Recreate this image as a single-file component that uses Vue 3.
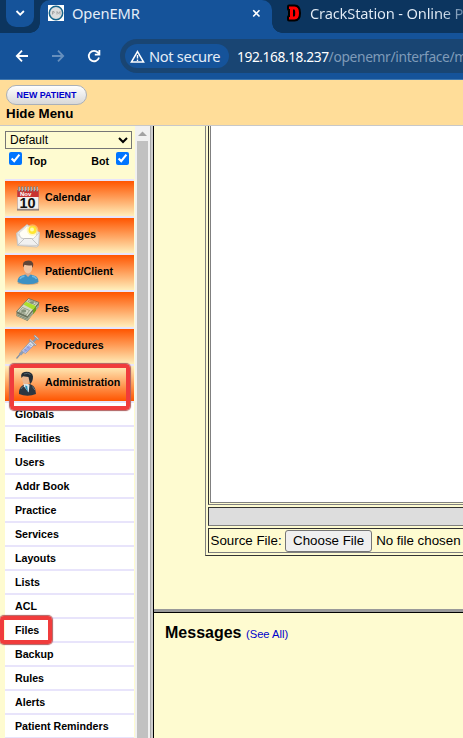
<script setup>
import { ref } from 'vue'

const menu = [
  { label: 'Calendar', icon: 'calendar' },
  { label: 'Messages', icon: 'mail' },
  { label: 'Patient/Client', icon: 'patient' },
  { label: 'Fees', icon: 'money' },
  { label: 'Procedures', icon: 'syringe' },
  { label: 'Administration', icon: 'admin', open: true },
]
const items = ['Globals', 'Facilities', 'Users', 'Addr Book', 'Practice', 'Services', 'Layouts', 'Lists', 'ACL', 'Files', 'Backup', 'Rules', 'Alerts', 'Patient Reminders']
const top = ref(true)
const bottom = ref(true)
</script>

<template>
  <div class="window">
    <div class="tabs">
      <div class="tab-search">
        <svg width="28" height="27" viewBox="0 0 28 27"><path d="M10.500 11l3.700 3.700 3.700-3.700" fill="none" stroke="#fff" stroke-width="1.800" /></svg>
      </div>
      <div class="tab active">
        <svg class="fav" width="16" height="16" viewBox="0 0 16 16">
          <rect width="16" height="16" fill="#fff" />
          <circle cx="8" cy="8" r="6.700" fill="#dedede" stroke="#17658b" stroke-width="1.500" />
          <path d="M4.500 9.500V6.500h1.500q1.500 1-1.500 2M9 9.500v-3l1.500 2 1.500-2v3" fill="none" stroke="#999" stroke-width=".8" />
        </svg>
        <span class="tab-title first">OpenEMR</span>
        <svg class="close" width="9" height="9" viewBox="0 0 9 9"><path d="M1.200 1.200l6.300 6.300M7.500 1.200L1.200 7.500" stroke="#fff" stroke-width="1.600" /></svg>
      </div>
      <div class="tab idle">
        <svg class="fav" width="16" height="18" viewBox="0 0 16 18">
          <path d="M3 2.500h5.500q4.500 0 4.500 6.500t-4.500 6.500H3V13h1V5H3z" fill="#000" stroke="#000" stroke-width="4" stroke-linejoin="round" />
          <path d="M3 2.500h5.500q4.500 0 4.500 6.500t-4.500 6.500H3V13h1V5H3z" fill="#f00" />
          <path d="M7 5.500h1.200q1 0 1 3.500t-1 3.500H7z" fill="#000" />
        </svg>
        <span class="tab-title second">CrackStation - Online P</span>
      </div>
    </div>

    <div class="toolbar">
      <svg class="nav" width="14" height="14" viewBox="0 0 14 14"><path d="M13 7H2M7 1.700L1.800 7 7 12.300" fill="none" stroke="#fff" stroke-width="1.800" /></svg>
      <svg class="nav" width="14" height="14" viewBox="0 0 14 14"><path d="M1 7h11M7 1.700L12.200 7 7 12.300" fill="none" stroke="#668fbd" stroke-width="1.800" /></svg>
      <svg class="nav" width="14" height="14" viewBox="0 0 14 14"><path d="M12 8.500A5.200 5.200 0 1 1 11 3.700L12 5M12.400 1v4.700H7.800" fill="none" stroke="#fff" stroke-width="1.800" /></svg>
      <div class="address">
        <div class="chip">
          <svg width="15" height="13" viewBox="0 0 15 13"><path d="M7.500 1.600L13.600 12H1.400z" fill="none" stroke="#fff" stroke-width="1.500" /><path d="M7.500 5v3.500M7.500 9.500V11" stroke="#fff" stroke-width="1.400" /></svg>
          <span class="chip-text">Not secure</span>
        </div>
        <span class="url"><b>192.168.18.237</b><span class="path">/openemr/interface/m</span></span>
      </div>
    </div>

    <header class="header">
      <a class="new-patient">NEW PATIENT</a>
      <div class="hide-menu">Hide Menu</div>
    </header>

    <div class="body">
      <aside class="sidebar">
        <select class="select"><option>Default</option></select>
        <div class="checks">
          <input v-model="top" type="checkbox"><span class="top-label">Top</span>
          <span class="bot-label">Bot</span><input v-model="bottom" type="checkbox">
        </div>
        <nav class="menu">
          <div v-for="m in menu" :key="m.label" class="group" :class="{ open: m.open }">
            <svg class="icon" width="24" height="25" viewBox="0 0 24 25">
              <g v-if="m.icon === 'calendar'">
                <path d="M1 22h22v2.500H1z" fill="#80706e" />
                <rect x="1.500" y="4" width="21" height="19" fill="#f2f0ef" stroke="#b9a9a5" stroke-width=".7" />
                <rect x="1.200" y="4" width="21.600" height="7" fill="#c83332" />
                <path d="M3 .5v5M6 .5v5M9 .5v5M12 .5v5M15 .5v5M18 .5v5M21 .5v5" stroke="#777" stroke-width="1.800" />
                <path d="M3.300 1v4M6.300 1v4M9.300 1v4M12.300 1v4M15.300 1v4M18.300 1v4M21.300 1v4" stroke="#d8d0d0" stroke-width=".8" />
                <text x="4" y="10.300" class="cal-month">Nov</text>
                <text x="11.500" y="21.500" text-anchor="middle" class="cal-day">10</text>
              </g>
              <g v-else-if="m.icon === 'mail'">
                <path d="M.5 10L11 1.500l12.500 8L22.500 22.500l-1.500 1.500L1.500 22.500z" fill="#e7e7e7" stroke="#bbb" stroke-width=".7" />
                <path d="M3 10l8-7L20.500 6v9l-8 2.500-8-3z" fill="#fffef6" stroke="#ccc" stroke-width=".6" />
                <path d="M.7 10l5 5.500h11.800l5.800-6-.8 13L2 22z" fill="#f1f1f1" stroke="#c4c4c4" stroke-width=".7" />
                <path d="M2 22l6.500-6.500h7l7 7" fill="none" stroke="#bababa" stroke-width=".8" />
                <circle cx="16.500" cy="7" r="5.800" fill="#fff08a" opacity=".5" />
                <circle cx="16.500" cy="7" r="4" fill="#ffe632" />
                <circle cx="16" cy="6.500" r="2" fill="#fffbb0" />
              </g>
              <g v-else-if="m.icon === 'patient'">
                <ellipse cx="12" cy="23" rx="10.500" ry="1.800" fill="#93765c" opacity=".5" />
                <path d="M1.500 22q0-5.500 4.500-6.500l4-1.300h4l4 1.300q4.500 1 4.500 6.500-4 2.200-10.500 2.200T1.500 22z" fill="#3c91c4" />
                <path d="M4 19q1-2.500 4.500-2.800M16 16.200q3.500.3 4.500 2.800" fill="none" stroke="#70b7df" stroke-width="1.500" />
                <path d="M9.500 11h5v3.500L12 17l-2.500-2.500z" fill="#dda886" />
                <ellipse cx="12" cy="7.800" rx="4.300" ry="5.700" fill="#efc5a5" />
                <path d="M7.300 7.500Q6 2.500 9 1.200q6-2 8 1.800.7 2-.5 5l-.8-2.800q-4 .6-7.200-.5z" fill="#5f4437" />
              </g>
              <g v-else-if="m.icon === 'money'">
                <path d="M.5 15.500L12.500 2l10.500 4v3.500L11.500 24 .5 19z" fill="#6b7560" />
                <path d="M.5 14.500L12.500 1.500l10.500 4-11.500 14z" fill="#d3d8c6" stroke="#5e6852" stroke-width=".8" />
                <path d="M1 17l10.500 4.500L23 7.500M1 18.500L11.500 23 23 9" fill="none" stroke="#c4ccb1" stroke-width=".7" />
                <path d="M3 14.500l3.500-4 7 3-3 4zM12 4.500l1.500-1.500 7 2.700-1.500 2z" fill="none" stroke="#7d8870" stroke-width=".7" />
                <ellipse cx="7.700" cy="14" rx="2.700" ry="1.800" fill="#84917a" />
                <ellipse cx="15.800" cy="5.500" rx="2.200" ry="1.300" fill="#84917a" />
                <path d="M7.500 7.500L10 4.800l10 4.200-2.800 3.800z" fill="#aae02f" />
                <path d="M17.200 12.800L20 9v4.500l-2.800 3.700z" fill="#6c9e18" />
              </g>
              <g v-else-if="m.icon === 'syringe'">
                <path d="M.5 24.500l6-7" stroke="#7f8ea4" stroke-width="1.200" />
                <path d="M4 20.500l3-3" stroke="#8f9eb6" stroke-width="3" />
                <path d="M5.500 17L15 6.500l4 3.500L9.500 19.500z" fill="#d5dce8" stroke="#8995ac" stroke-width=".8" />
                <path d="M6.800 17l5.700-6 3 2.800-6 5z" fill="#9fabeb" />
                <path d="M8.500 15l2 2M11 12.500l2 2M13.500 10l2 2" stroke="#7386a0" stroke-width=".7" />
                <path d="M13.500 5.500l6.500 6M17 8l3.700-4M18.200 1.500l4.600 4.200" stroke="#9298a2" stroke-width="2" />
                <path d="M14 5.500l6 5.500M18.700 1.700l3.600 3.300" stroke="#e2e5ea" stroke-width=".8" />
              </g>
              <g v-else>
                <path d="M3 23q-.5-6 3.500-8.500L10 13h4q4 1.500 5.200 5l.8 5q-4 1.800-8.500 1.800T3 23z" fill="#2d3740" />
                <path d="M4.800 18q1.500-2.500 4-3.300M16.500 15.500l2.300 3.500" stroke="#697682" fill="none" />
                <path d="M7.500 12l6 1.500-.8 8-4.700-6z" fill="#dce7ec" />
                <path d="M9.200 14.500l2 .5.800 6-2.500-4z" fill="#278fb8" />
                <ellipse cx="9.800" cy="8.500" rx="3.500" ry="4.800" fill="#e9b690" />
                <path d="M5.500 7Q4 2 8.500 1q7.500-1 8.500 4.500 0 5.500-3 7.500L12.500 6 7 5.200z" fill="#232c35" />
                <path d="M8 3q4-1.700 6.500.5" stroke="#55636b" fill="none" />
              </g>
            </svg>
            <span>{{ m.label }}</span>
            <i v-if="m.open" class="mark mark-admin"></i>
          </div>
          <div v-for="i in items" :key="i" class="item">{{ i }}<i v-if="i === 'Files'" class="mark mark-files"></i></div>
        </nav>
      </aside>
      <div class="scroll">
        <svg width="15" height="15" viewBox="0 0 15 15"><path d="M3 10h9L7.500 5.500z" fill="#a3a3a3" /></svg>
        <div class="thumb"></div>
      </div>
      <div class="divider"></div>
      <main class="main">
        <section class="upper">
          <div class="table">
            <div class="cell editor"><div class="frame"></div></div>
            <div class="cell bar"></div>
            <div class="cell source"><span>Source File:</span><button class="choose">Choose File</button><span class="none">No file chosen</span></div>
          </div>
        </section>
        <section class="lower"><b>Messages</b> <a>(See All)</a></section>
      </main>
    </div>
  </div>
</template>

<style>
body { overflow: hidden; }
</style>

<style scoped>
.window { width: 463px; height: 738px; overflow: hidden; display: flex; flex-direction: column; background: #fefbd0; font-family: "Liberation Sans", Arial, sans-serif; color: #000; }
.window * { box-sizing: border-box; }
svg { display: block; flex: none; }
.tabs { height: 33px; flex: none; display: flex; background: #0c355f; overflow: hidden; }
.tab-search { flex: none; width: 28px; height: 27px; margin-left: 6px; background: #15539a; border-radius: 0 0 10px 10px; }
.tab { flex: none; display: flex; height: 33px; font-family: "Noto Sans", sans-serif; }
.active { position: relative; width: 232px; margin-left: 6px; background: #15539a; border-radius: 10px 10px 0 0; padding-left: 8px; }
.active::before, .active::after { content: ''; position: absolute; bottom: 0; width: 10px; height: 10px; }
.active::before { left: -10px; background: radial-gradient(circle at 0 0, transparent 9.500px, #15539a 10px); }
.active::after { right: -10px; background: radial-gradient(circle at 100% 0, transparent 9.500px, #15539a 10px); }
.fav { margin-top: 5px; }
.tab-title { font-size: 14.700px; line-height: 20px; margin-top: 3px; color: #e4edf7; white-space: nowrap; }
.first { margin-left: 8px; width: 155px; letter-spacing: -.1px; }
.close { margin: 9px 0 0 24.500px; }
.idle { padding-left: 14px; }
.idle .fav { margin-top: 4px; }
.second { margin-left: 8px; letter-spacing: -.18px; background: linear-gradient(90deg, #e4edf7 130px, #54789c 155px); background-clip: text; color: transparent; }
.toolbar { height: 47px; flex: none; background: #15539a; border-bottom: 1px solid #4077ae; display: flex; padding: 6px 0 0 15px; }
.nav { margin: 10px 22px 0 0; }
.address { flex: none; display: flex; align-items: center; width: 380px; height: 34px; margin-left: -3px; padding-left: 5px; border-radius: 17px; background: #194573; font-family: "Noto Sans", sans-serif; white-space: nowrap; }
.chip { flex: none; width: 104px; height: 24px; border-radius: 12px; background: #15539a; display: flex; align-items: center; padding-left: 5px; gap: 4px; }
.chip-text { font-size: 14.700px; letter-spacing: -.35px; color: #e4edf7; }
.url { margin-left: 8px; font-size: 13.800px; letter-spacing: -.45px; color: #7f9bb9; }
.url b { font-weight: 400; color: #fff; }
.path { letter-spacing: -.35px; }
.header { height: 46px; flex: none; background: #ffdd99; border-bottom: 1px solid #c8c8c8; padding: 5px 0 0 6px; }
.new-patient { display: flex; align-items: center; justify-content: center; width: 81px; height: 20px; border: 1px solid #aab0b8; border-radius: 10px; background: linear-gradient(#fff, #d8d8d8); color: #0000cc; font-size: 8.900px; font-weight: 700; white-space: nowrap; }
.hide-menu { font-size: 13.333px; font-weight: 700; line-height: 15px; margin-top: 1px; }
.body { flex: 1; display: flex; min-height: 0; }
.sidebar { width: 135px; flex: none; padding: 5px 1px 0 5px; font-size: 10.667px; font-weight: 700; }
.select { display: block; width: 127px; height: 18px; border: 1px solid #767676; border-radius: 0; background-color: #fefbd0; font: 12px "Liberation Sans", sans-serif; color: #000; padding: 0; }
.checks { display: flex; height: 30px; padding: 3px 5px 0 4px; }
.checks input { width: 13px; height: 13px; margin: 0; }
.checks span { line-height: 13px; padding-top: 3px; }
.top-label { margin-left: 6px; flex: 1; }
.bot-label { margin-right: 7px; }
.menu { border-top: 2px solid #e8e4fb; }
.group { position: relative; height: 37px; display: flex; gap: 5px; padding: 5px 0 0 11px; border-bottom: 2px solid #e8e4fb; background: linear-gradient(#ff5500, #ffeebb) 0 0 / 100% 35px no-repeat; line-height: 22px; }
.group.open { background-image: linear-gradient(#ffeebb, #ff5500); }
.cal-month { font: 700 6px "Liberation Sans", sans-serif; fill: #fff; }
.cal-day { font: 700 14.500px "Liberation Sans", sans-serif; fill: #111; }
.item { position: relative; height: 24px; background: #fff; border-bottom: 2px solid #e8e4fb; padding-left: 10px; line-height: 22px; }
.mark { position: absolute; border: 4px solid #f03c3c; border-radius: 4px; box-shadow: 0 0 1px 1px #b06060; z-index: 2; }
.mark-admin { left: 5px; top: -2px; width: 120px; height: 46px; }
.mark-files { left: -5px; top: -3px; width: 52px; height: 28px; }
.scroll { width: 15px; flex: none; background: #f1f1f1; display: flex; flex-direction: column; }
.thumb { flex: 1; margin: 0 2px; background: #c1c1c1; }
.divider { width: 4px; flex: none; background: linear-gradient(90deg, #aaa 1px, #ccc 1px 3px, #000 3px); }
.main { flex: 1; min-width: 0; display: flex; flex-direction: column; overflow: hidden; }
.upper { height: 487px; flex: none; border-bottom: 1px solid #000; box-shadow: inset 0 -3px #999; padding-left: 51px; }
.table { height: 430px; width: 600px; border: 1px solid #808080; border-width: 0 0 1px 1px; border-bottom-color: #333; display: flex; flex-direction: column; gap: 2px; padding: 0 0 2px 2px; }
.cell { border: 1px solid #808080; border-top-color: #333; border-left-color: #333; }
.editor { height: 379px; border-top: 0; padding: 0 0 1px 1px; }
.frame { height: 377px; background: #fff; border: solid #808080; border-width: 0 0 1px 1px; }
.bar { height: 19px; background: #ddd; }
.source { height: 25px; display: flex; align-items: center; padding-left: 1.500px; font-size: 13.333px; white-space: nowrap; }
.choose { width: 87px; height: 22px; margin-left: 3.500px; padding: 0; font: 13.333px "Liberation Sans", sans-serif; border: 1px solid #767676; border-radius: 3px; background: #efefef; color: #000; }
.none { margin-left: 4px; }
.lower { padding: 10px 0 0 11px; font-size: 16px; line-height: 19px; }
.lower a { font-size: 11.200px; color: #0000cc; }
</style>
